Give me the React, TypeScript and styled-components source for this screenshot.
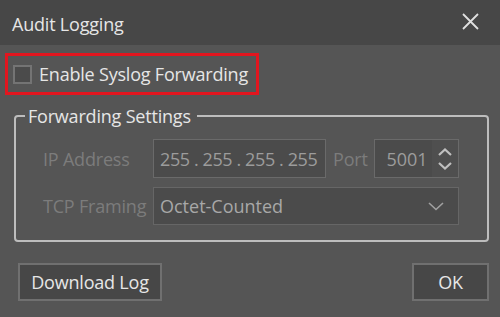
import styled, { createGlobalStyle } from "styled-components";

const GlobalStyle = createGlobalStyle`
  html, body {
    margin: 0;
    padding: 0;
    background: #555555;
  }
  body {
    font-family: "Open Sans", "Noto Sans", sans-serif;
  }
`;

const Dialog = styled.div`
  width: 500px;
  height: 317px;
  background: #555555;
  display: flex;
  flex-direction: column;
  overflow: hidden;
`;

const TitleBar = styled.div`
  height: 45px;
  background: #474747;
  display: flex;
  align-items: center;
  justify-content: space-between;
  padding: 3px 21px 0 12px;
  box-sizing: border-box;
`;

const Title = styled.span`
  color: #e6e6e6;
  font-size: 18px;
  letter-spacing: -0.2px;
`;

const CloseButton = styled.button`
  background: none;
  border: none;
  padding: 0;
  width: 18px;
  height: 18px;
  display: flex;
  align-items: center;
  justify-content: center;
  margin-top: -6px;
`;

const Body = styled.div`
  display: flex;
  flex-direction: column;
  padding: 8px 11px 0 5px;
`;

const Highlight = styled.div`
  width: 254px;
  height: 42px;
  box-sizing: border-box;
  border: 3px solid #e2161f;
  display: flex;
  align-items: center;
  gap: 7px;
  padding-left: 5px;
`;

const Checkbox = styled.span`
  width: 19px;
  height: 19px;
  box-sizing: border-box;
  border: 2px solid #747474;
  background: #4b4b4b;
`;

const CheckLabel = styled.span`
  color: #e6e6e6;
  font-size: 18px;
  letter-spacing: -0.2px;
`;

const Group = styled.fieldset`
  margin: 11px 0 0 9px;
  padding: 13px 26px 12px 27px;
  border: 2px solid #bdbdbd;
  border-radius: 4px;
  height: 136px;
  box-sizing: border-box;
  display: flex;
  flex-direction: column;
  gap: 9px;
`;

const Legend = styled.legend`
  color: #e6e6e6;
  font-size: 18px;
  letter-spacing: -0.2px;
  padding: 0 6px 0 3px;
  margin-left: -18px;
  line-height: 20px;
`;

const Row = styled.div`
  display: flex;
  align-items: center;
`;

const FieldLabel = styled.span<{ $width?: number }>`
  color: #7c7c7c;
  font-size: 18px;
  letter-spacing: -0.2px;
  width: ${(p) => (p.$width ? `${p.$width}px` : "auto")};
  flex-shrink: 0;
`;

const Input = styled.div<{ $width: number }>`
  width: ${(p) => p.$width}px;
  height: 39px;
  box-sizing: border-box;
  border: 1px solid #6a6a6a;
  background: #4b4b4b;
  color: #9c9c9c;
  font-size: 18px;
  letter-spacing: -0.4px;
  display: flex;
  align-items: center;
  padding-left: 6px;
  white-space: nowrap;
  overflow: hidden;
`;

const PortLabel = styled(FieldLabel)`
  margin: 0 6px 0 7px;
`;

const Spin = styled.div`
  width: 85px;
  height: 39px;
  box-sizing: border-box;
  border: 1px solid #6a6a6a;
  display: flex;
`;

const SpinValue = styled.div`
  flex: 1;
  background: #4b4b4b;
  color: #9c9c9c;
  font-size: 18px;
  display: flex;
  align-items: center;
  justify-content: flex-end;
  padding-right: 4px;
`;

const SpinArrows = styled.div`
  width: 26px;
  background: #4f4f4f;
  display: flex;
  flex-direction: column;
  align-items: center;
  justify-content: center;
  gap: 6px;
`;

const Select = styled.div`
  width: 306px;
  height: 38px;
  box-sizing: border-box;
  border: 1px solid #666666;
  background: #4b4b4b;
  color: #a8a8a8;
  font-size: 18px;
  display: flex;
  align-items: center;
  justify-content: space-between;
  padding: 0 14px 0 6px;
`;

const Footer = styled.div`
  display: flex;
  justify-content: space-between;
  padding: 21px 11px 0 18px;
`;

const Button = styled.button<{ $width: number }>`
  width: ${(p) => p.$width}px;
  height: 38px;
  box-sizing: border-box;
  border: 2px solid #707070;
  background: #474747;
  color: #e6e6e6;
  font-family: "Open Sans", "Noto Sans", sans-serif;
  font-size: 18px;
  letter-spacing: -0.2px;
  padding: 0;
`;

const Chevron = ({ up }: { up?: boolean }) => (
  <svg width="14" height="8" viewBox="0 0 14 8">
    <path
      d={up ? "M1 7 L7 1.5 L13 7" : "M1 1 L7 6.5 L13 1"}
      fill="none"
      stroke="#c0c0c0"
      strokeWidth="2.2"
    />
  </svg>
);

export default function App() {
  return (
    <Dialog>
      <GlobalStyle />
      <TitleBar>
        <Title>Audit Logging</Title>
        <CloseButton>
          <svg width="17" height="17" viewBox="0 0 17 17">
            <path d="M1 1 L16 16 M16 1 L1 16" stroke="#e0e0e0" strokeWidth="1.8" />
          </svg>
        </CloseButton>
      </TitleBar>
      <Body>
        <Highlight>
          <Checkbox />
          <CheckLabel>Enable Syslog Forwarding</CheckLabel>
        </Highlight>
        <Group>
          <Legend>Forwarding Settings</Legend>
          <Row>
            <FieldLabel $width={110}>IP Address</FieldLabel>
            <Input $width={173}>255 . 255 . 255 . 255</Input>
            <PortLabel>Port</PortLabel>
            <Spin>
              <SpinValue>5001</SpinValue>
              <SpinArrows>
                <Chevron up />
                <Chevron />
              </SpinArrows>
            </Spin>
          </Row>
          <Row>
            <FieldLabel $width={110}>TCP Framing</FieldLabel>
            <Select>
              Octet-Counted
              <svg width="16" height="9" viewBox="0 0 16 9">
                <path d="M1 1 L8 7.5 L15 1" fill="none" stroke="#a0a0a0" strokeWidth="1.6" />
              </svg>
            </Select>
          </Row>
        </Group>
      </Body>
      <Footer>
        <Button $width={144}>Download Log</Button>
        <Button $width={77}>OK</Button>
      </Footer>
    </Dialog>
  );
}
